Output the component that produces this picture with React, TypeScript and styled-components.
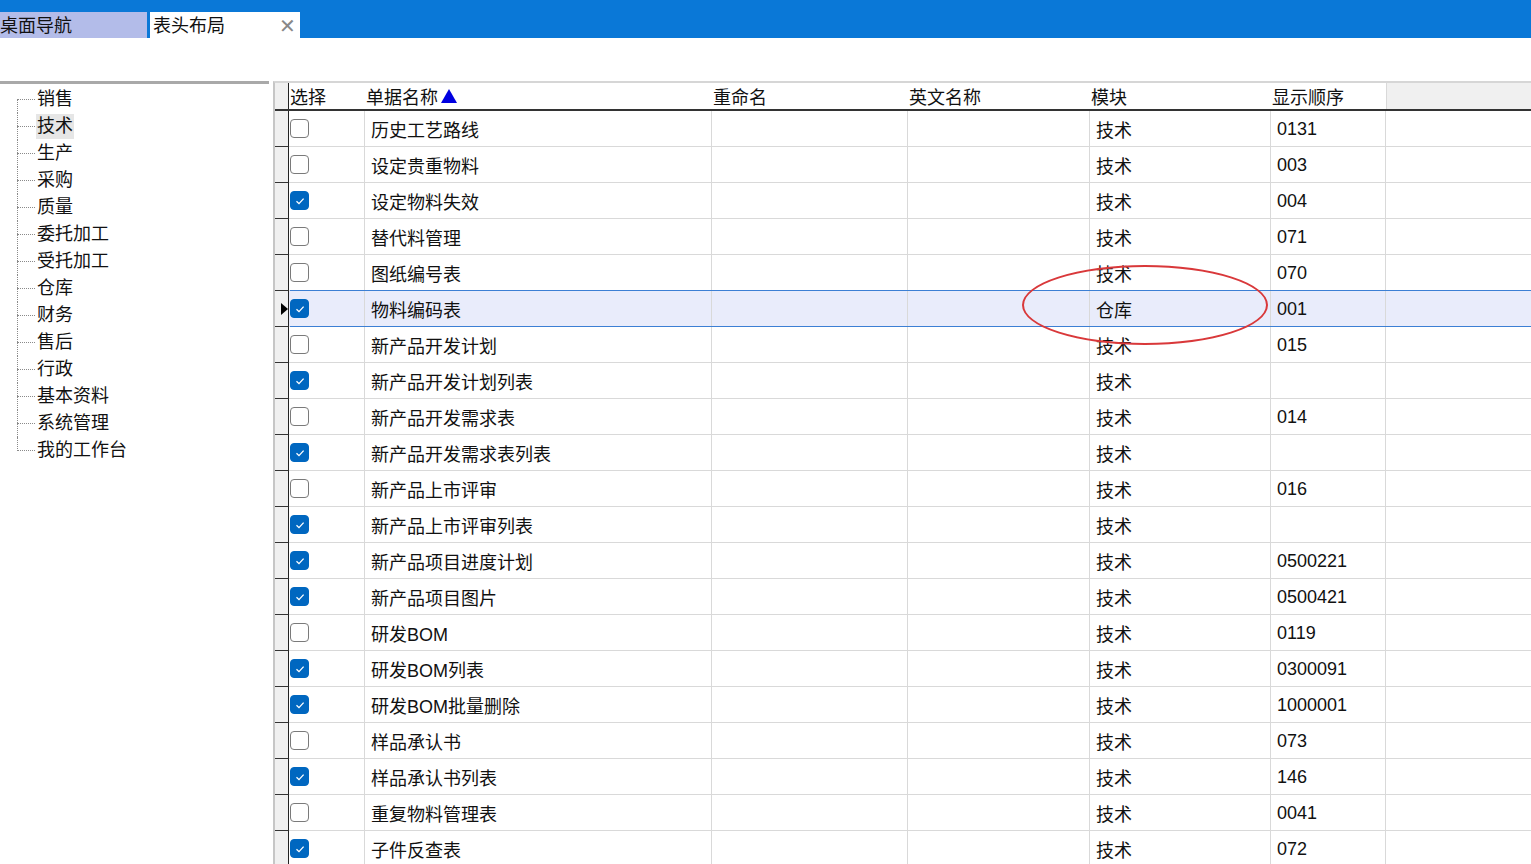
import { FC } from 'react';
import styled, { createGlobalStyle } from 'styled-components';

const GlobalStyle = createGlobalStyle`
  html, body {
    margin: 0;
    padding: 0;
    height: 100%;
    overflow: hidden;
    background: #fff;
    font-family: "Liberation Sans", "Noto Sans CJK SC", sans-serif;
    color: #111;
  }
`;

const Page = styled.div`
  width: 1531px;
  height: 864px;
  display: flex;
  flex-direction: column;
  overflow: hidden;
`;

const TabBar = styled.div`
  height: 38px;
  background: #0a78d7;
  display: flex;
  align-items: flex-end;
  gap: 3px;
  flex-shrink: 0;
`;

const Tab = styled.div<{ $active?: boolean }>`
  height: 26px;
  width: ${p => (p.$active ? '150px' : '147px')};
  background: ${p => (p.$active ? '#fff' : '#b3bce9')};
  display: flex;
  align-items: center;
  justify-content: space-between;
  box-sizing: border-box;
  padding: 2px 4px 0 ${p => (p.$active ? '3px' : '0')};
  font-size: 18px;
  line-height: 24px;
  color: #111;
`;

const CloseMark = styled.span`
  color: #888;
  font-size: 20px;
  font-weight: 300;
`;

const Toolbar = styled.div`
  height: 43px;
  flex-shrink: 0;
`;

const Main = styled.div`
  flex: 1;
  display: flex;
  gap: 4px;
  min-height: 0;
`;

const TreePanel = styled.div`
  width: 269px;
  flex-shrink: 0;
  border-top: 3px solid #a9a9a9;
  box-sizing: border-box;
  padding: 2px 0 0 17px;
`;

const TreeList = styled.ul`
  list-style: none;
  margin: 0;
  padding: 0;
`;

const TreeItem = styled.li<{ $selected?: boolean }>`
  height: 27px;
  display: flex;
  align-items: center;
  position: relative;
  font-size: 18px;
  &::before {
    content: '';
    width: 18px;
    border-top: 1px dotted #8a8a8a;
    margin-right: 1px;
  }
  &::after {
    content: '';
    position: absolute;
    left: 0;
    top: 0;
    bottom: 0;
    border-left: 1px dotted #8a8a8a;
  }
  &:first-child::after {
    top: 50%;
  }
  &:last-child::after {
    bottom: 50%;
  }
  span {
    padding: 0 1px;
    line-height: 25px;
    background: ${p => (p.$selected ? '#e6e6e6' : 'transparent')};
  }
`;

const GridPanel = styled.div`
  flex: 1;
  border-top: 2px solid #d6d6d6;
  border-left: 2px solid #c6c6c6;
  display: flex;
  flex-direction: column;
  min-width: 0;
  position: relative;
`;

const cols = '14px 76px 347px 196px 182px 181px 115px 1fr';

const HeaderRow = styled.div`
  display: grid;
  grid-template-columns: ${cols};
  height: 26px;
  border-bottom: 2px solid #333;
  font-size: 18px;
`;

const HeaderCell = styled.div<{ $filler?: boolean; $selector?: boolean }>`
  display: flex;
  align-items: center;
  padding-left: ${p => (p.$selector ? '0' : '1px')};
  background: ${p => (p.$filler || p.$selector ? '#f0f0f0' : '#fff')};
  border-left: ${p => (p.$filler ? '1px solid #d9d9d9' : 'none')};
  border-right: ${p => (p.$selector ? '1px solid #222' : 'none')};
  white-space: nowrap;
`;

const SortArrow = styled.span`
  display: inline-block;
  width: 0;
  height: 0;
  margin-left: 3px;
  border-left: 8px solid transparent;
  border-right: 8px solid transparent;
  border-bottom: 14px solid #0000e0;
`;

const Row = styled.div<{ $selected?: boolean }>`
  display: grid;
  grid-template-columns: ${cols};
  height: 36px;
  flex-shrink: 0;
  font-size: 18px;
  background: ${p => (p.$selected ? '#e9ecfb' : '#fff')};
  position: relative;
  ${p =>
    p.$selected &&
    `
    &::after {
      content: '';
      position: absolute;
      left: 15px;
      right: 0;
      top: -1px;
      bottom: 0;
      border-top: 1px solid #3c7fd4;
      border-bottom: 1px solid #3c7fd4;
      pointer-events: none;
    }
  `}
`;

const SelectorCell = styled.div`
  background: #f0f0f0;
  border-right: 1px solid #222;
  border-bottom: 1px solid #333;
  display: flex;
  align-items: center;
  justify-content: flex-end;
`;

const RowMark = styled.span`
  width: 0;
  height: 0;
  border-top: 6px solid transparent;
  border-bottom: 6px solid transparent;
  border-left: 7px solid #000;
`;

const Cell = styled.div<{ $last?: boolean }>`
  display: flex;
  align-items: center;
  padding-left: 6px;
  padding-top: 1px;
  border-bottom: 1px solid #d9d9d9;
  border-right: ${p => (p.$last ? 'none' : '1px solid #d9d9d9')};
  white-space: nowrap;
`;

const CheckCell = styled(Cell)`
  padding-left: 1px;
  padding-top: 0;
`;

const Check = styled.span<{ $on: boolean }>`
  width: 19px;
  height: 19px;
  box-sizing: border-box;
  border-radius: 4px;
  border: 1px solid ${p => (p.$on ? '#0067c0' : '#7a7a7a')};
  background: ${p => (p.$on ? '#0067c0' : '#fff')};
  display: flex;
  align-items: center;
  justify-content: center;
`;

const Oval = styled.div`
  position: absolute;
  left: 747px;
  top: 182px;
  width: 246px;
  height: 80px;
  border: 2px solid #d9383a;
  border-radius: 50%;
  box-sizing: border-box;
  pointer-events: none;
`;

interface IBill {
  name: string;
  checked: boolean;
  module: string;
  order: string;
}

const tree = ['销售', '技术', '生产', '采购', '质量', '委托加工', '受托加工', '仓库', '财务', '售后', '行政', '基本资料', '系统管理', '我的工作台'];

const bills: IBill[] = [
  { name: '历史工艺路线', checked: false, module: '技术', order: '0131' },
  { name: '设定贵重物料', checked: false, module: '技术', order: '003' },
  { name: '设定物料失效', checked: true, module: '技术', order: '004' },
  { name: '替代料管理', checked: false, module: '技术', order: '071' },
  { name: '图纸编号表', checked: false, module: '技术', order: '070' },
  { name: '物料编码表', checked: true, module: '仓库', order: '001' },
  { name: '新产品开发计划', checked: false, module: '技术', order: '015' },
  { name: '新产品开发计划列表', checked: true, module: '技术', order: '' },
  { name: '新产品开发需求表', checked: false, module: '技术', order: '014' },
  { name: '新产品开发需求表列表', checked: true, module: '技术', order: '' },
  { name: '新产品上市评审', checked: false, module: '技术', order: '016' },
  { name: '新产品上市评审列表', checked: true, module: '技术', order: '' },
  { name: '新产品项目进度计划', checked: true, module: '技术', order: '0500221' },
  { name: '新产品项目图片', checked: true, module: '技术', order: '0500421' },
  { name: '研发BOM', checked: false, module: '技术', order: '0119' },
  { name: '研发BOM列表', checked: true, module: '技术', order: '0300091' },
  { name: '研发BOM批量删除', checked: true, module: '技术', order: '1000001' },
  { name: '样品承认书', checked: false, module: '技术', order: '073' },
  { name: '样品承认书列表', checked: true, module: '技术', order: '146' },
  { name: '重复物料管理表', checked: false, module: '技术', order: '0041' },
  { name: '子件反查表', checked: true, module: '技术', order: '072' },
];

const SELECTED = 5;

// -------------------------------------------------------------

const App: FC = () => {
  return (
    <Page>
      <GlobalStyle />
      <TabBar>
        <Tab>桌面导航</Tab>
        <Tab $active>
          表头布局
          <CloseMark>✕</CloseMark>
        </Tab>
      </TabBar>
      <Toolbar />
      <Main>
        <TreePanel>
          <TreeList>
            {tree.map((t, i) => (
              <TreeItem key={t} $selected={i === 1}>
                <span>{t}</span>
              </TreeItem>
            ))}
          </TreeList>
        </TreePanel>
        <GridPanel>
          <HeaderRow>
            <HeaderCell $selector />
            <HeaderCell>选择</HeaderCell>
            <HeaderCell>
              单据名称<SortArrow />
            </HeaderCell>
            <HeaderCell>重命名</HeaderCell>
            <HeaderCell>英文名称</HeaderCell>
            <HeaderCell>模块</HeaderCell>
            <HeaderCell>显示顺序</HeaderCell>
            <HeaderCell $filler />
          </HeaderRow>
          {bills.map((b, i) => (
            <Row key={b.name} $selected={i === SELECTED}>
              <SelectorCell>{i === SELECTED && <RowMark />}</SelectorCell>
              <CheckCell>
                <Check $on={b.checked}>
                  {b.checked && (
                    <svg width="12" height="12" viewBox="0 0 12 12">
                      <path d="M2.5 6.2 L5 8.6 L9.6 3.6" fill="none" stroke="#fff" strokeWidth="1.3" />
                    </svg>
                  )}
                </Check>
              </CheckCell>
              <Cell>{b.name}</Cell>
              <Cell />
              <Cell />
              <Cell>{b.module}</Cell>
              <Cell>{b.order}</Cell>
              <Cell $last />
            </Row>
          ))}
          <Oval />
        </GridPanel>
      </Main>
    </Page>
  );
};

export default App;
